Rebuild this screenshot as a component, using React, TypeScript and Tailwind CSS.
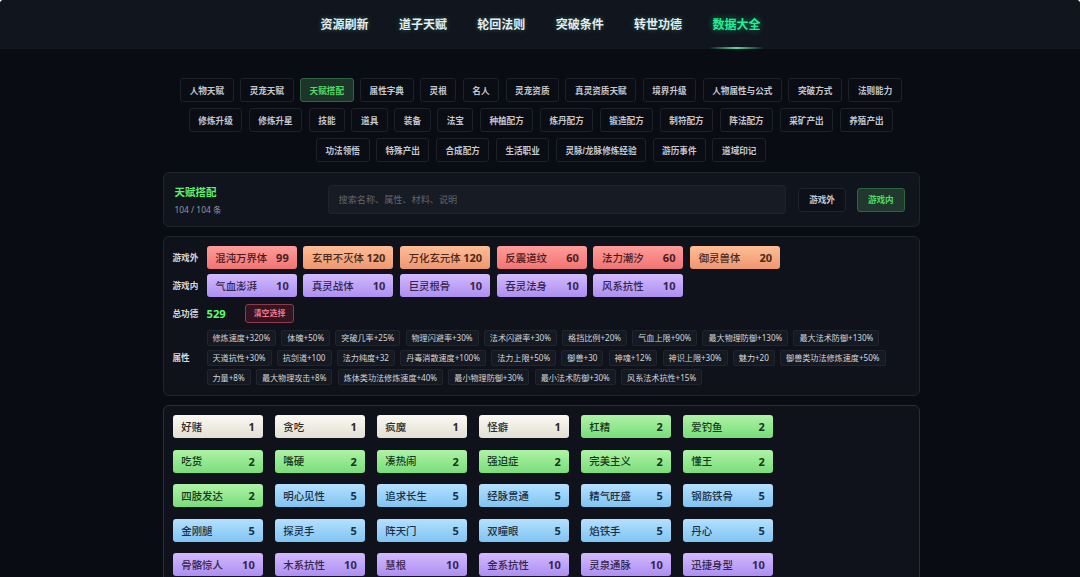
const nav = ["资源刷新", "道子天赋", "轮回法则", "突破条件", "转世功德", "数据大全"];

const categories = [
  ["人物天赋", "灵宠天赋", "天赋搭配", "属性字典", "灵根", "名人", "灵宠资质", "真灵资质天赋", "境界升级", "人物属性与公式", "突破方式", "法则能力"],
  ["修炼升级", "修炼升星", "技能", "道具", "装备", "法宝", "种植配方", "炼丹配方", "锻造配方", "制符配方", "阵法配方", "采矿产出", "养殖产出"],
  ["功法领悟", "特殊产出", "合成配方", "生活职业", "灵脉/龙脉修炼经验", "游历事件", "道域印记"],
];

type Tone = "red" | "orange" | "purple" | "white" | "green" | "blue";
type Talent = [string, number, Tone];

const tones: Record<Tone, string> = {
  red: "bg-linear-to-b from-[#ff9c9a] to-[#f07474] text-[#4a1c20]",
  orange: "bg-linear-to-b from-[#ffbd96] to-[#ee9770] text-[#4a2a1c]",
  purple: "bg-linear-to-b from-[#d3b9ff] to-[#ad8ff0] text-[#35264f]",
  white: "bg-linear-to-b from-[#fbf9f2] to-[#e2dfd4] text-[#2c2a28]",
  green: "bg-linear-to-b from-[#aef3a6] to-[#78dd7a] text-[#17381f]",
  blue: "bg-linear-to-b from-[#b4e0ff] to-[#80c4f2] text-[#183048]",
};

const outer: Talent[] = [
  ["混沌万界体", 99, "red"], ["玄甲不灭体", 120, "orange"], ["万化玄元体", 120, "orange"],
  ["反震道纹", 60, "red"], ["法力潮汐", 60, "red"], ["御灵兽体", 20, "orange"],
];
const inner: Talent[] = [
  ["气血澎湃", 10, "purple"], ["真灵战体", 10, "purple"], ["巨灵根骨", 10, "purple"],
  ["吞灵法身", 10, "purple"], ["风系抗性", 10, "purple"],
];

const attributes = [
  ["修炼速度+320%", "体魄+50%", "突破几率+25%", "物理闪避率+30%", "法术闪避率+30%", "格挡比例+20%", "气血上限+90%", "最大物理防御+130%", "最大法术防御+130%"],
  ["天道抗性+30%", "抗剑道+100", "法力纯度+32", "丹毒消散速度+100%", "法力上限+50%", "御兽+30", "神魂+12%", "神识上限+30%", "魅力+20", "御兽类功法修炼速度+50%"],
  ["力量+8%", "最大物理攻击+8%", "炼体类功法修炼速度+40%", "最小物理防御+30%", "最小法术防御+30%", "风系法术抗性+15%"],
];

const talents: Talent[] = [
  ["好赌", 1, "white"], ["贪吃", 1, "white"], ["疯魔", 1, "white"], ["怪癖", 1, "white"], ["杠精", 2, "green"], ["爱钓鱼", 2, "green"],
  ["吃货", 2, "green"], ["嘴硬", 2, "green"], ["凑热闹", 2, "green"], ["强迫症", 2, "green"], ["完美主义", 2, "green"], ["懂王", 2, "green"],
  ["四肢发达", 2, "green"], ["明心见性", 5, "blue"], ["追求长生", 5, "blue"], ["经脉贯通", 5, "blue"], ["精气旺盛", 5, "blue"], ["钢筋铁骨", 5, "blue"],
  ["金刚腿", 5, "blue"], ["探灵手", 5, "blue"], ["阵天门", 5, "blue"], ["双瞳眼", 5, "blue"], ["焰铁手", 5, "blue"], ["丹心", 5, "blue"],
  ["骨骼惊人", 10, "purple"], ["木系抗性", 10, "purple"], ["慧根", 10, "purple"], ["金系抗性", 10, "purple"], ["灵泉通脉", 10, "purple"], ["迅捷身型", 10, "purple"],
];

function Chip({ talent: [name, cost, tone] }: { talent: Talent }) {
  return (
    <button className={`flex h-[23px] w-[90px] shrink-0 items-center justify-between rounded-[3px] pl-[8.8px] pr-[7.8px] leading-none whitespace-nowrap ${tones[tone]}`}>
      <span className="pt-px text-[10.4px] font-medium">{name}</span>
      <span className="text-[11px] font-bold">{cost}</span>
    </button>
  );
}

function Pill({ label, active = false }: { label: string; active?: boolean }) {
  return (
    <button
      className={`flex h-6 items-center rounded-[3px] border px-[8.6px] pt-[2px] font-['Liberation_Sans','Noto_Sans_CJK_SC',sans-serif] text-[8.6px] leading-none font-bold whitespace-nowrap ${
        active ? "border-[#2d6640] bg-[#1c3528] text-[#4fdc62]" : "border-[#1d2128] bg-[#0a0d14] text-[#c3c7cf]"
      }`}
    >
      {label}
    </button>
  );
}

export default function App() {
  return (
    <div className="h-[577px] overflow-hidden bg-white font-['Noto_Sans','Noto_Sans_CJK_SC',sans-serif]">
      <div className="flex h-full flex-col items-center rounded-t-[4px] bg-[#0a0c13]">
        <nav className="flex h-[49px] w-full shrink-0 justify-center gap-[15px] rounded-t-[4px] bg-[#11151e] pl-px">
          {nav.map((item, i) => {
            const active = i === nav.length - 1;
            return (
              <a
                key={item}
                className={`relative flex h-full w-[63.4px] items-center justify-center pt-px text-[12px] leading-none font-bold whitespace-nowrap ${
                  active
                    ? "text-[#1ff096] [text-shadow:0_0_6px_rgba(16,220,130,0.6)]"
                    : "text-[#e6edef] [text-shadow:0_0_5px_rgba(80,190,170,0.45)]"
                }`}
              >
                {item}
                {active && <span className="absolute inset-x-1 bottom-0 h-[2px] bg-linear-to-r from-transparent via-[#4be3a5] to-transparent" />}
              </a>
            );
          })}
        </nav>

        <div className="mt-[29px] flex shrink-0 flex-col items-center gap-[6px] pl-[2px]">
          {categories.map((row, i) => (
            <div key={i} className="flex gap-[6.4px]">
              {row.map((c) => <Pill key={c} label={c} active={c === "天赋搭配"} />)}
            </div>
          ))}
        </div>

        <main className="mt-[10px] ml-[2px] flex w-[757px] flex-col gap-[9px]">
          <section className="flex h-[55px] items-center rounded-[6px] border border-[#20252d] bg-[#10141d] pr-[14px] pl-[11px]">
            <div className="flex w-[153px] flex-col gap-[6.5px] pt-[2px] leading-none">
              <h1 className="text-[10.5px] leading-[11px] font-bold text-[#5df06c]">天赋搭配</h1>
              <p className="text-[8.4px] leading-[9px] text-[#9298a3]">104 / 104 条</p>
            </div>
            <input
              placeholder="搜索名称、属性、材料、说明"
              className="h-[29px] w-[458px] rounded-[3px] border border-[#1e222b] bg-[#171b24] px-[10px] text-[9.15px] text-white placeholder:text-[#61656d] placeholder:opacity-100"
            />
            <div className="ml-auto flex gap-[11.4px]">
              <button className="flex h-6 w-[47.4px] items-center justify-center rounded-[3px] border border-[#20242c] bg-[#0d1018] pt-px text-[8.6px] leading-none font-bold text-[#c3c7cf]">游戏外</button>
              <button className="flex h-6 w-[47.4px] items-center justify-center rounded-[3px] border border-[#2d6640] bg-[#20382e] pt-px text-[8.6px] leading-none font-bold text-[#4fdc62]">游戏内</button>
            </div>
          </section>

          <section className="h-[160px] shrink-0 rounded-[6px] border border-[#20252d] bg-[#0f121a] pt-[9px] pl-[9px] text-[8.6px] leading-none text-[#d5d8de]">
            {[{ label: "游戏外", items: outer }, { label: "游戏内", items: inner }].map((group) => (
              <div key={group.label} className="mb-[5px] flex items-center">
                <span className="w-[34px] shrink-0 pt-px font-bold">{group.label}</span>
                <div className="flex gap-[6.7px]">
                  {group.items.map((t) => <Chip key={t[0]} talent={t} />)}
                </div>
              </div>
            ))}
            <div className="mt-[7px] flex h-[19px] items-center">
              <span className="w-[34px] pt-px font-bold">总功德</span>
              <span className="w-[38.5px] text-[11.2px] font-bold text-[#5dff6c]">529</span>
              <button className="flex h-[19px] w-[49px] items-center justify-center rounded-[3px] border border-[#8c3a4c] bg-[#34151f] pt-px text-[7.9px] font-bold text-[#f5748c]">清空选择</button>
            </div>
            <div className="mt-[7px] flex items-center">
              <span className="w-[34px] shrink-0 pt-px font-bold">属性</span>
              <div className="flex flex-col gap-[3.6px]">
                {attributes.map((row, i) => (
                  <div key={i} className="flex gap-[5.2px]">
                    {row.map((a) => (
                      <span key={a} className="flex h-4 items-center rounded-[2px] border border-[#20242c] bg-[#151922] px-[5px] pt-px text-[8.1px] whitespace-nowrap text-[#d2d6dc]">{a}</span>
                    ))}
                  </div>
                ))}
              </div>
            </div>
          </section>

          <section className="h-[200px] shrink-0 rounded-[6px] border border-[#2a2f37] bg-[#0f121a] pt-[9px] pl-[9px]">
            <div className="grid grid-cols-[repeat(6,90px)] gap-x-[12px] gap-y-[11.6px]">
              {talents.map((t) => <Chip key={t[0]} talent={t} />)}
            </div>
          </section>
        </main>
      </div>
    </div>
  );
}
